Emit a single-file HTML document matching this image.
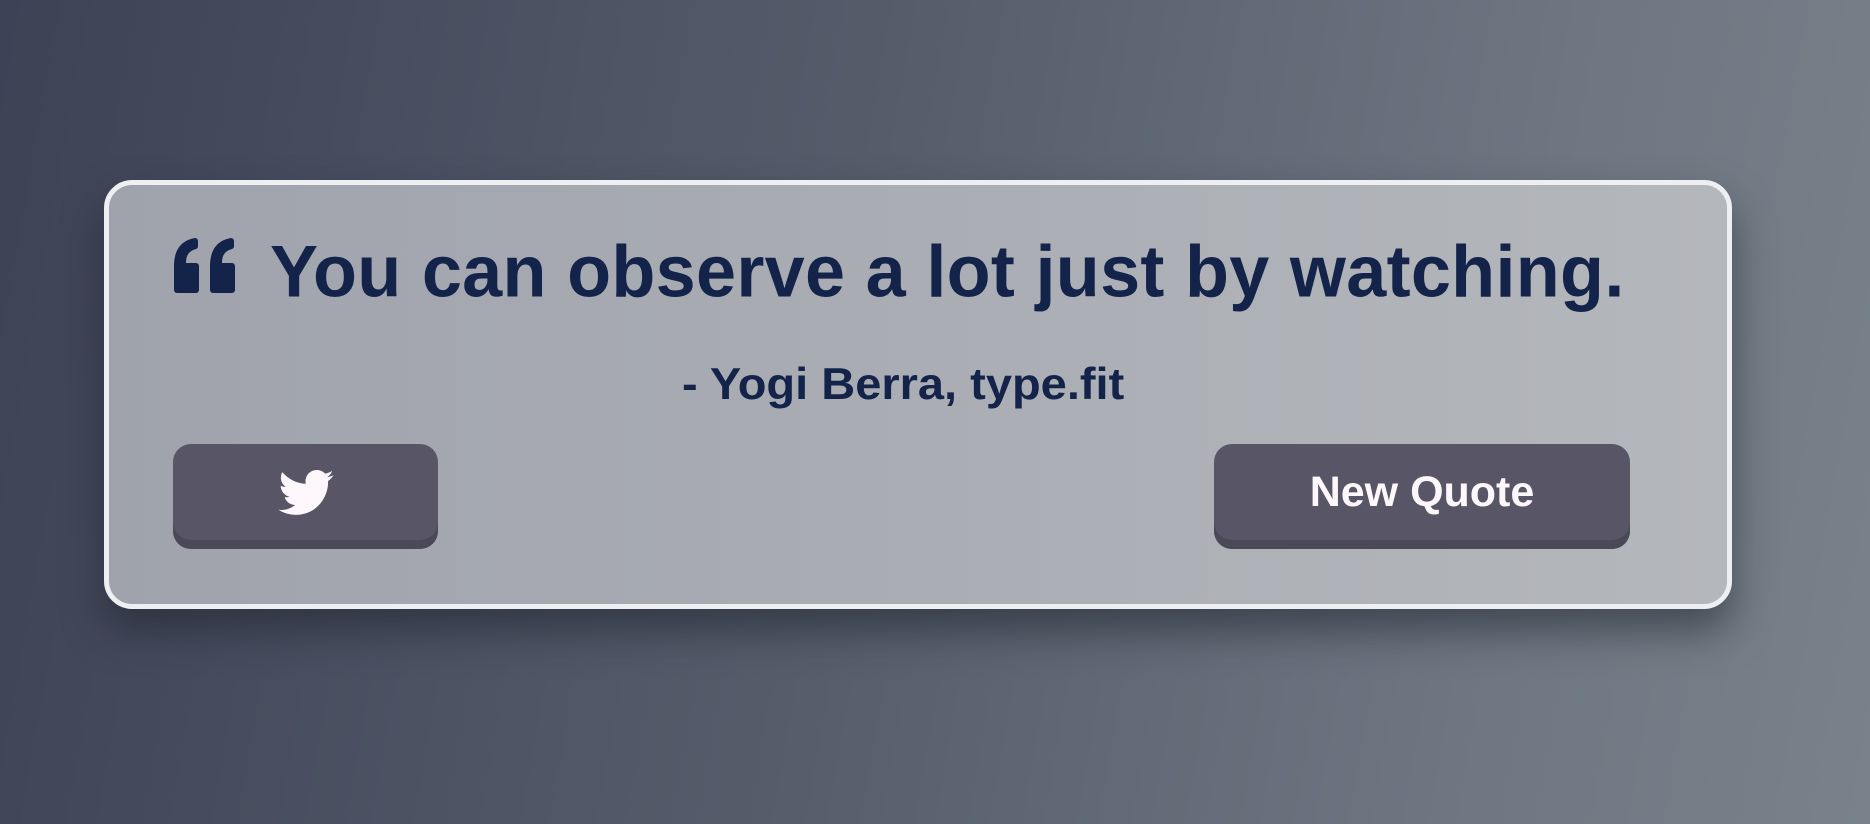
<!DOCTYPE html>
<html><head><meta charset="utf-8"><style>
html,body{margin:0;padding:0;width:1870px;height:824px;overflow:hidden}
body{background:linear-gradient(100deg,#3d4255 0%,#555d6b 45%,#6e7782 80%,#79828a 100%);position:relative;font-family:"Liberation Sans",sans-serif}
.card{position:absolute;left:104px;top:180px;width:1618px;height:419px;border:5px solid #eeeff2;border-radius:28px;background:linear-gradient(90deg,#a0a3ac,#b4b7bb);box-shadow:0 22px 40px rgba(30,34,45,.55)}
.q{position:absolute;left:173px;top:236px}
.txt{position:absolute;left:270px;top:230px;font-size:72px;font-weight:bold;color:#13234a;white-space:nowrap;transform:scaleY(1.02);transform-origin:left top;letter-spacing:0.3px}
.auth{position:absolute;left:682px;top:357px;font-size:47px;font-weight:bold;color:#13234a;white-space:nowrap;transform:scaleY(0.95);transform-origin:left top}
.btn{position:absolute;top:444px;height:105px;background:#575566;border-radius:18px;box-shadow:inset 0 -9px 0 #4b4957;color:#fdf7fb;font-weight:bold;font-size:43px;text-align:center;line-height:96px}
</style></head><body>
<div class="card"></div>
<svg class="q" width="63" height="57" viewBox="0 0 63 57"><g fill="#13234a">
<path d="M4 57h19a3 3 0 0 0 3-3V30a3 3 0 0 0-3-3H13c0-8 3-12 10-14a3 3 0 0 0 2-3V5a3 3 0 0 0-3-3C10 4 1 12 1 30v24a3 3 0 0 0 3 3z"/>
<path d="M40 57h19a3 3 0 0 0 3-3V30a3 3 0 0 0-3-3H49c0-8 3-12 10-14a3 3 0 0 0 2-3V5a3 3 0 0 0-3-3C46 4 37 12 37 30v24a3 3 0 0 0 3 3z"/></g></svg>
<div class="txt">You can observe a lot just by watching.</div>
<div class="auth">- Yogi Berra, type.fit</div>
<div class="btn" style="left:173px;width:265px">
<svg style="position:absolute;left:105px;top:26px" width="56" height="46" viewBox="0 0 24 20"><path fill="#fdf7fb" d="M24 2.3c-.9.4-1.8.7-2.8.8 1-.6 1.8-1.6 2.2-2.7-1 .6-2 1-3.1 1.2A4.9 4.9 0 0 0 11.9 6C7.8 5.8 4.2 3.8 1.7.9c-1.3 2.300-.5 5 1.5 6.5-.8 0-1.6-.2-2.2-.6 0 2.4 1.7 4.4 3.9 4.9-.7.2-1.5.2-2.2.1.6 2 2.4 3.4 4.6 3.4A9.9 9.9 0 0 1 0 17.3 14 14 0 0 0 7.5 19.5c9.1 0 14.1-7.6 14.1-14.1v-.6c1-.7 1.8-1.6 2.4-2.5z"/></svg>
</div>
<div class="btn" style="left:1214px;width:416px">New Quote</div>
</body></html>
